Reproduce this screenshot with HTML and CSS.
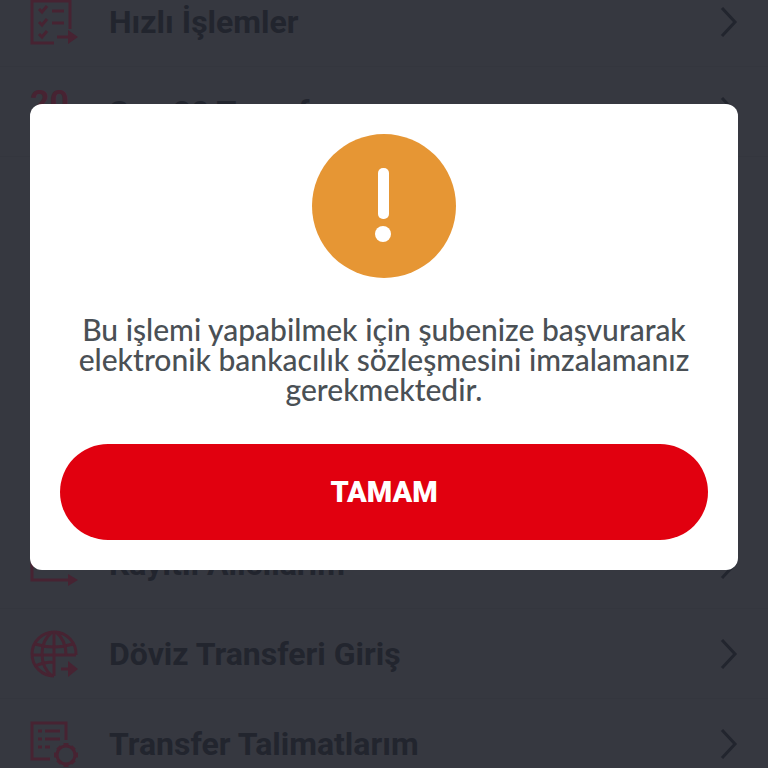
FILE: index.html
```html
<!DOCTYPE html>
<html lang="tr">
<head>
    <meta charset="UTF-8">
    <meta name="viewport" content="width=device-width, initial-scale=1.0">
    <title>Transferler</title>
    <link rel="stylesheet" href="styles.css">
</head>
<body>
    <main class="screen">
        <nav class="menu menu-top">
            <a class="menu-row" href="#">
                <svg class="menu-icon" viewBox="0 0 48 48">
                    <path d="M40 31V3H2V45H24"/>
                    <path d="M9 11l3 3 5-6M9 24l3 3 5-6M9 36l3 3 5-6M22 13h12M22 25h12"/>
                    <path d="M27 39h12"/>
                    <path class="solid" d="M38 32l10 7-10 7z"/>
                </svg>
                <span class="menu-label">Hızlı İşlemler</span>
                <svg class="chevron" viewBox="0 0 18 30"><path d="M2 1l13 14L2 29"/></svg>
            </a>
            <a class="menu-row" href="#">
                <svg class="menu-icon" viewBox="0 0 48 48">
                    <text class="icon-number" x="0" y="26">20</text>
                </svg>
                <span class="menu-label">Son 20 Transfer</span>
                <svg class="chevron" viewBox="0 0 18 30"><path d="M2 1l13 14L2 29"/></svg>
            </a>
        </nav>
        <nav class="menu menu-bottom">
            <a class="menu-row" href="#">
                <svg class="menu-icon" viewBox="0 0 48 48">
                    <path d="M2 3V40H40"/>
                    <path class="solid" d="M38 34l10 6-10 6z"/>
                </svg>
                <span class="menu-label">Kayıtlı Alıcılarım</span>
                <svg class="chevron" viewBox="0 0 18 30"><path d="M2 1l13 14L2 29"/></svg>
            </a>
            <a class="menu-row" href="#">
                <svg class="menu-icon" viewBox="0 0 48 48">
                    <path d="M46 25A22 22 0 1 0 24 46"/>
                    <path d="M24 2V46M2 25H46M5 14Q24 20 43 14M5 36Q14 32 24 32"/>
                    <path d="M22 2Q12 10 12 24T22 46M26 2Q36 10 36 25"/>
                    <path d="M31 39h10"/>
                    <path class="solid" d="M38 31l10 8-10 8z"/>
                </svg>
                <span class="menu-label">Döviz Transferi Giriş</span>
                <svg class="chevron" viewBox="0 0 18 30"><path d="M2 1l13 14L2 29"/></svg>
            </a>
            <a class="menu-row" href="#">
                <svg class="menu-icon" viewBox="0 0 48 48">
                    <path d="M36 20V3H2V39H20"/>
                    <path d="M8 11h4M15 11h15M8 19h4M15 19h15M8 27h4M15 27h5"/>
                    <circle cx="36" cy="35" r="9"/>
                    <path class="teeth" d="M36 26v-3M36 44v3M27 35h-3M45 35h3M30 29l-2-2M42 29l2-2M30 41l-2 2M42 41l2 2"/>
                </svg>
                <span class="menu-label">Transfer Talimatlarım</span>
                <svg class="chevron" viewBox="0 0 18 30"><path d="M2 1l13 14L2 29"/></svg>
            </a>
        </nav>
    </main>
    <div class="overlay">
        <div class="dialog" role="alertdialog" aria-modal="true" aria-describedby="dialog-text">
            <svg class="dialog-icon" viewBox="0 0 144 144">
                <circle cx="72" cy="72" r="72" fill="#e69634"/>
                <rect x="66" y="34" width="11" height="51" rx="5" fill="#fff"/>
                <circle cx="71" cy="100" r="8" fill="#fff"/>
            </svg>
            <p class="dialog-text" id="dialog-text">Bu işlemi yapabilmek için şubenize başvurarak elektronik bankacılık sözleşmesini imzalamanız gerekmektedir.</p>
            <button class="dialog-btn" type="button">TAMAM</button>
        </div>
    </div>
</body>
</html>
```
FILE: styles.css
```css
*{
    box-sizing:border-box;
}
body{
    margin:0;
    background:#363840;
    font-family:Roboto, "Liberation Sans", sans-serif;
}
.screen{
    height:100vh;
    display:flex;
    flex-direction:column;
    justify-content:space-between;
    overflow:hidden;
}
/* the list is scrolled, so its first and last rows are cut */
.menu-top{
    margin-top:-23px;
}
.menu-bottom{
    margin-bottom:-21px;
}
.menu-row{
    display:flex;
    align-items:center;
    gap:31px;
    height:90px;
    padding:0 30px;
    border-bottom:1px solid #34363e;
    color:#22252e;
    text-decoration:none;
}
.menu-icon{
    width:48px;
    height:48px;
    flex:none;
    overflow:visible;
    fill:none;
    stroke:#472332;
    stroke-width:3;
}
.menu-icon .solid{
    fill:#472332;
    stroke:none;
}
.menu-icon .teeth{
    stroke-width:5;
}
.icon-number{
    fill:#472332;
    stroke:none;
    font-size:34px;
    font-weight:700;
}
.menu-label{
    flex:1;
    font-size:32px;
    font-weight:700;
}
.chevron{
    width:18px;
    height:30px;
    fill:none;
    stroke:#22252e;
    stroke-width:3;
}
.overlay{
    position:fixed;
    inset:0;
    padding:104px 30px 30px;
}
.dialog{
    display:flex;
    flex-direction:column;
    align-items:center;
    padding:30px;
    border-radius:12px;
    background:#fff;
}
.dialog-icon{
    width:144px;
    height:144px;
}
.dialog-text{
    margin:36px 0 40px;
    padding:0 16px;
    color:#4a5055;
    font-family:Lato, Roboto, sans-serif;
    font-size:30px;
    font-weight:500;
    line-height:30px;
    text-align:center;
}
.dialog-btn{
    width:100%;
    height:96px;
    border:0;
    border-radius:48px;
    background:#e1000f;
    color:#fff;
    font-family:inherit;
    font-size:29px;
    font-weight:900;
    cursor:pointer;
}
```
